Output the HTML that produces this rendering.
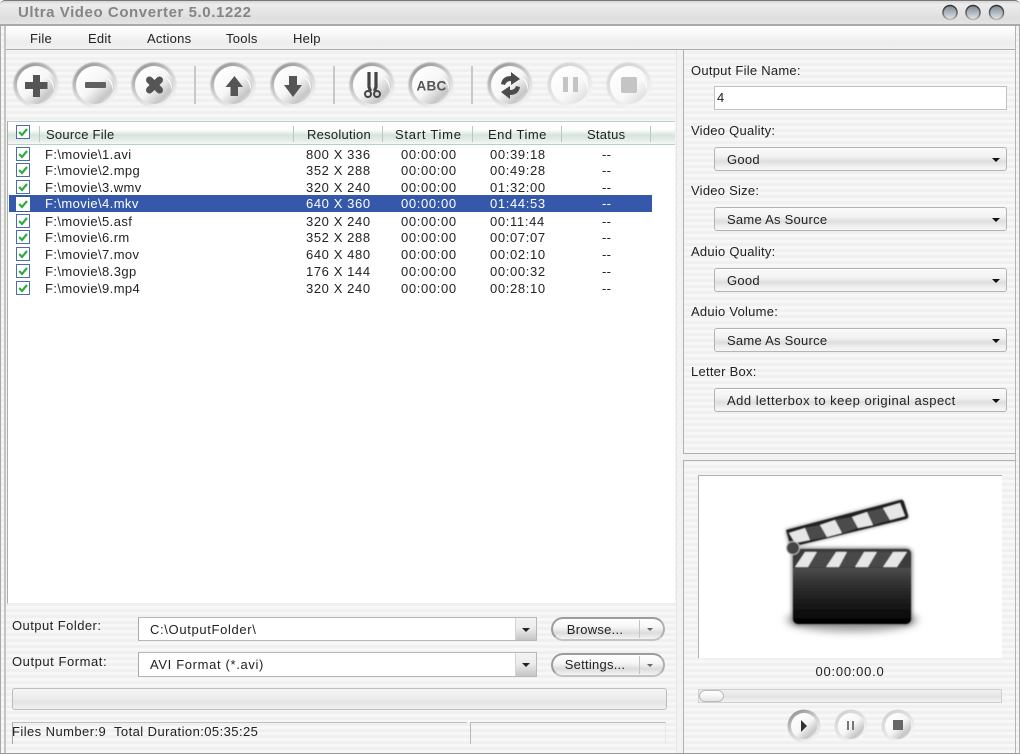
<!DOCTYPE html>
<html><head><meta charset="utf-8"><title>Ultra Video Converter</title>
<style>
html,body{margin:0;padding:0;background:#f2f2f2}
#w{position:relative;width:1020px;height:754px;overflow:hidden;font:13px/16px "Liberation Sans",sans-serif;color:#222;letter-spacing:.25px;
background:repeating-linear-gradient(#f7f7f7 0 3px,#f0f0f0 3px 6px)}
#w div{position:absolute;white-space:pre}
.combo{left:714px;width:291px;height:22px;border:1px solid #b4b4b4;border-radius:3px;background:linear-gradient(#fbfbfb,#f2f2f2 40%,#dedede 60%,#f0f0f0 85%,#f6f6f6)}
.combo span{position:absolute;left:12px;top:4px}
.combo i{position:absolute;right:6px;top:10px;width:0;height:0;border:4.5px solid transparent;border-top:4.5px solid #111;border-bottom:0}
.lab{left:691px}
.inp{left:138px;width:397px;height:22px;background:#fff;border:1px solid #b8b8b8;border-left-color:#aaa}
.inp span{position:absolute;left:11px;top:4px;letter-spacing:.65px}
.dd{position:absolute;right:0;top:0;width:20px;height:100%;background:linear-gradient(#f4f4f4,#ececec 45%,#c4c4c4);border-left:1px solid #d4d4d4;margin:0}
.dd i{position:absolute;left:6px;top:10px;border:4px solid transparent;border-top:4px solid #222;border-bottom:0;width:0;height:0}
.pill{left:551px;width:110px;height:20px;border:2px solid #9c9c9c;border-radius:12px;background:linear-gradient(#fff,#f6f6f6 40%,#dcdcdc 70%,#f4f4f4);border-bottom-color:#c4c4c4;border-right-color:#b0b0b0}
.pill span{position:absolute;top:2px;left:0;width:84px;text-align:center}
.pill b{position:absolute;left:86px;top:1px;width:1px;height:18px;background:#c4c4c4}
.pill i{position:absolute;left:94px;top:9px;border:3px solid transparent;border-top:3px solid #666;border-bottom:0;width:0;height:0}
.r{left:9px;width:643px;height:17px;line-height:17px}
.r span{position:absolute;top:0}
.a{left:36px;letter-spacing:.4px}.b{left:297px;letter-spacing:.6px}.c{left:392px;letter-spacing:.65px}.d{left:481px;letter-spacing:.65px}.e{left:593px}
.sel{background:#3558ab;color:#fff}
.h{top:127px;line-height:16px}
.sp{top:126px;width:1px;height:16px;background:#b9c9bf}
</style></head><body>
<div id="w">
<!-- title bar -->
<div style="left:0;top:0;width:1020px;height:25px;background:linear-gradient(#d6d6d6,#ececec 14%,#e4e4e4 50%,#dedede 75%,#e6e6e6);border-top:1px solid #777;box-sizing:border-box;border-radius:5px 5px 0 0"></div>
<div style="left:18px;top:4px;font:bold 15px/18px 'Liberation Sans',sans-serif;color:#858585;letter-spacing:.57px">Ultra Video Converter 5.0.1222</div>
<div style="left:0;top:24px;width:1020px;height:2px;background:#a9a9a9"></div>
<!-- frame -->
<div style="left:0;top:26px;width:1px;height:728px;background:#aaa"></div>
<div style="left:4px;top:26px;width:2px;height:728px;background:#c4c4c4"></div>
<div style="left:1015px;top:26px;width:1px;height:728px;background:#b4b4b4"></div>
<div style="left:1019px;top:26px;width:1px;height:728px;background:#aaa"></div>
<div style="left:0;top:753px;width:1020px;height:1px;background:#999"></div>
<!-- menu -->
<div style="left:6px;top:26px;width:1009px;height:23px;background:linear-gradient(#fff,#f8f8f8 35%,#ededed 70%,#f1f1f1);border-bottom:1px solid #ababab"></div>
<div style="left:30px;top:31px">File</div>
<div style="left:88px;top:31px">Edit</div>
<div style="left:147px;top:31px">Actions</div>
<div style="left:226px;top:31px">Tools</div>
<div style="left:293px;top:31px">Help</div>
<!-- splitters -->
<div style="left:676px;top:50px;width:6px;height:703px;background:#f2f2f2;border-left:1px solid #e8e4e0;border-right:1px solid #b0b0b0"></div>
<div style="left:683px;top:453px;width:332px;height:8px;background:#f2f2f2;border-top:1px solid #b0b0b0;border-bottom:1px solid #b0b0b0;box-sizing:border-box"></div>
<!-- toolbar separators -->
<div style="left:194px;top:66px;width:2px;height:38px;background:#c8c8c8"></div>
<div style="left:333px;top:66px;width:2px;height:38px;background:#c8c8c8"></div>
<div style="left:471px;top:66px;width:2px;height:38px;background:#c8c8c8"></div>
<!-- list -->
<div style="left:7px;top:121px;width:668px;height:483px;background:#fff;border-left:1px solid #a8b0a8;box-sizing:border-box;border-bottom:1px solid #f0ece6"></div>
<div style="left:8px;top:121px;width:667px;height:24px;box-sizing:border-box;border-top:1px solid #b8cfc0;border-bottom:1px solid #b8cfc0;background:linear-gradient(#fff,#fdfefd 35%,#d6e4dc 60%,#e6efe9 85%,#f6f9f7)"></div>
<div class="sp" style="left:39px"></div><div class="sp" style="left:293px"></div><div class="sp" style="left:382px"></div><div class="sp" style="left:472px"></div><div class="sp" style="left:561px"></div><div class="sp" style="left:650px"></div>
<div class="h" style="left:46px">Source File</div>
<div class="h" style="left:307px">Resolution</div>
<div class="h" style="left:395px;letter-spacing:.75px">Start Time</div>
<div class="h" style="left:488px;letter-spacing:.5px">End Time</div>
<div class="h" style="left:587px">Status</div>
<div class="r" style="top:146px"><span class="a">F:\movie\1.avi</span><span class="b">800 X 336</span><span class="c">00:00:00</span><span class="d">00:39:18</span><span class="e">--</span></div>
<div class="r" style="top:162px"><span class="a">F:\movie\2.mpg</span><span class="b">352 X 288</span><span class="c">00:00:00</span><span class="d">00:49:28</span><span class="e">--</span></div>
<div class="r" style="top:179px"><span class="a">F:\movie\3.wmv</span><span class="b">320 X 240</span><span class="c">00:00:00</span><span class="d">01:32:00</span><span class="e">--</span></div>
<div class="r sel" style="top:195px"><span class="a">F:\movie\4.mkv</span><span class="b">640 X 360</span><span class="c">00:00:00</span><span class="d">01:44:53</span><span class="e">--</span></div>
<div class="r" style="top:213px"><span class="a">F:\movie\5.asf</span><span class="b">320 X 240</span><span class="c">00:00:00</span><span class="d">00:11:44</span><span class="e">--</span></div>
<div class="r" style="top:229px"><span class="a">F:\movie\6.rm</span><span class="b">352 X 288</span><span class="c">00:00:00</span><span class="d">00:07:07</span><span class="e">--</span></div>
<div class="r" style="top:246px"><span class="a">F:\movie\7.mov</span><span class="b">640 X 480</span><span class="c">00:00:00</span><span class="d">00:02:10</span><span class="e">--</span></div>
<div class="r" style="top:263px"><span class="a">F:\movie\8.3gp</span><span class="b">176 X 144</span><span class="c">00:00:00</span><span class="d">00:00:32</span><span class="e">--</span></div>
<div class="r" style="top:280px"><span class="a">F:\movie\9.mp4</span><span class="b">320 X 240</span><span class="c">00:00:00</span><span class="d">00:28:10</span><span class="e">--</span></div>
<!-- bottom left -->
<div style="left:12px;top:618px;letter-spacing:.45px">Output Folder:</div>
<div style="left:12px;top:654px;letter-spacing:.55px">Output Format:</div>
<div class="inp" style="top:617px"><span>C:\OutputFolder\</span><p class="dd"><i></i></p></div>
<div class="inp" style="top:652px;height:23px"><span>AVI Format (*.avi)</span><p class="dd"><i></i></p></div>
<div class="pill" style="top:617px"><span style="top:3px">Browse...</span><b></b><i></i></div>
<div class="pill" style="top:653px"><span>Settings...</span><b></b><i></i></div>
<div style="left:12px;top:688px;width:653px;height:20px;border:1px solid #bdbdbd;border-radius:3px;background:linear-gradient(#f4f4f4,#ededed 45%,#e4e4e4 65%,#f0f0f0)"></div>
<div style="left:12px;top:722px;width:454px;height:21px;border-top:1px solid #bdbdbd;border-left:1px solid #a8a8a8"></div>
<div style="left:470px;top:722px;width:194px;height:21px;border-top:1px solid #bdbdbd;border-left:1px solid #b8b8b8;border-right:1px solid #e8e8e8"></div>
<div style="left:12px;top:724px;letter-spacing:.43px">Files Number:9  Total Duration:05:35:25</div>
<!-- right panel -->
<div class="lab" style="top:63px">Output File Name:</div>
<div style="left:714px;top:86px;width:291px;height:22px;background:#fff;border:1px solid #c0c0c0"><span style="position:absolute;left:2px;top:3px">4</span></div>
<div class="lab" style="top:123px">Video Quality:</div>
<div class="combo" style="top:147px"><span>Good</span><i></i></div>
<div class="lab" style="top:183px">Video Size:</div>
<div class="combo" style="top:207px"><span>Same As Source</span><i></i></div>
<div class="lab" style="top:244px">Aduio Quality:</div>
<div class="combo" style="top:268px"><span>Good</span><i></i></div>
<div class="lab" style="top:304px">Aduio Volume:</div>
<div class="combo" style="top:328px"><span>Same As Source</span><i></i></div>
<div class="lab" style="top:364px">Letter Box:</div>
<div class="combo" style="top:388px"><span style="letter-spacing:.5px">Add letterbox to keep original aspect</span><i></i></div>
<!-- preview -->
<div style="left:698px;top:475px;width:304px;height:183px;box-sizing:border-box;background:#fff;border-top:1px solid #b0b0b0;border-left:1px solid #b0b0b0"></div>
<div style="left:698px;top:664px;width:304px;text-align:center;letter-spacing:.75px">00:00:00.0</div>
<div style="left:698px;top:689px;width:302px;height:12px;border:1px solid #d0d0d0;background:linear-gradient(#f0f0f0,#e4e4e4 55%,#f2f2f2)"></div>
<div style="left:699px;top:690px;width:23px;height:10px;border:1px solid #bbb;border-radius:6px;background:linear-gradient(#fff,#f2f2f2 60%,#e4e4e4)"></div>
<!-- graphics -->
<svg style="position:absolute;left:0;top:0" width="1020" height="754" viewBox="0 0 1020 754">
<defs>
<linearGradient id="ring" x1="0.2" y1="0" x2="0.8" y2="1"><stop offset="0" stop-color="#8e8e8e"/><stop offset=".45" stop-color="#cfcfcf"/><stop offset="1" stop-color="#f8f8f8"/></linearGradient>
<linearGradient id="face" x1="0.15" y1="0.1" x2="0.9" y2="0.9"><stop offset="0" stop-color="#fff"/><stop offset=".5" stop-color="#f6f6f6"/><stop offset=".85" stop-color="#c6c6c6"/><stop offset="1" stop-color="#e4e4e4"/></linearGradient>
<linearGradient id="ringL" x1="0.2" y1="0" x2="0.8" y2="1"><stop offset="0" stop-color="#d0d0d0"/><stop offset=".5" stop-color="#e4e4e4"/><stop offset="1" stop-color="#fafafa"/></linearGradient>
<linearGradient id="faceL" x1="0.15" y1="0.1" x2="0.9" y2="0.9"><stop offset="0" stop-color="#fff"/><stop offset=".6" stop-color="#f8f8f8"/><stop offset="1" stop-color="#dcdcdc"/></linearGradient>
<linearGradient id="body" x1="0" y1="0" x2="0" y2="1"><stop offset="0" stop-color="#6e6e6e"/><stop offset=".45" stop-color="#333"/><stop offset="1" stop-color="#000"/></linearGradient>
<linearGradient id="wb" x1="0" y1="0" x2="0" y2="1"><stop offset="0" stop-color="#7f878f"/><stop offset=".45" stop-color="#a9b1b9"/><stop offset="1" stop-color="#e4e8ec"/></linearGradient>
<linearGradient id="wbs" x1="0" y1="0" x2="0" y2="1"><stop offset="0" stop-color="#333"/><stop offset=".6" stop-color="#666"/><stop offset="1" stop-color="#bbb"/></linearGradient>
<filter id="bl" x="-30%" y="-30%" width="160%" height="160%"><feGaussianBlur stdDeviation="4"/></filter>
<filter id="bh" x="-20%" y="-20%" width="140%" height="140%"><feGaussianBlur stdDeviation="2"/></filter>
<filter id="bs" x="-10%" y="-10%" width="120%" height="120%"><feGaussianBlur stdDeviation=".6"/></filter>
<filter id="br" x="-10%" y="-10%" width="120%" height="120%"><feGaussianBlur stdDeviation=".7"/></filter>
<symbol id="bn" viewBox="-24 -24 48 48" overflow="visible">
<circle r="22.500" fill="url(#ring)" filter="url(#br)"/><circle r="19" fill="url(#face)"/>
<path d="M10 -8 A14 14 0 0 1 17 6 A10 10 0 0 0 10 -8Z" fill="#fff" opacity=".9"/>
</symbol>
<symbol id="bnL" viewBox="-24 -24 48 48" overflow="visible">
<circle r="22.500" fill="url(#ringL)" filter="url(#br)"/><circle r="19" fill="url(#faceL)"/>
<path d="M10 -8 A14 14 0 0 1 17 6 A10 10 0 0 0 10 -8Z" fill="#fff"/>
</symbol>
<symbol id="ck" viewBox="0 0 14 14">
<rect x=".5" y=".5" width="13" height="13" fill="#fff" stroke="#4a6fa8"/>
<path d="M3.2 7 L6 10 L11 4" fill="none" stroke="#2eab3a" stroke-width="2.2"/>
</symbol>
</defs>
<g><use href="#bn" x="12" y="61" width="48" height="48"/><path d="M33 75h7v7h7.500v7h-7.500v8h-7v-8h-8v-7h8z" fill="#555"/></g>
<g><use href="#bn" x="71" y="61" width="48" height="48"/><rect x="85" y="82" width="21" height="6" rx="1" fill="#606060"/></g>
<g><use href="#bn" x="130" y="61" width="48" height="48"/><path d="M149.500 80l10 10M159.500 80l-10 10" fill="none" stroke="#555" stroke-width="7" stroke-linecap="round"/></g>
<g><use href="#bn" x="209" y="61" width="48" height="48"/><path d="M234.500 76l8.500 11h-5v9h-7.500v-9h-5z" fill="#555"/></g>
<g><use href="#bn" x="269" y="61" width="48" height="48"/><path d="M289 76h8v9h5l-9 12-9-12h5z" fill="#555"/></g>
<g><use href="#bn" x="348" y="61" width="48" height="48"/>
<path d="M369 72v15l1.500 4M376 72v15l-1.500 4" fill="none" stroke="#444" stroke-width="3.200"/>
<circle cx="368" cy="94" r="3" fill="none" stroke="#444" stroke-width="2"/><circle cx="377" cy="94" r="3" fill="none" stroke="#444" stroke-width="2"/></g>
<g><use href="#bn" x="407" y="61" width="48" height="48"/><text x="431.500" y="90.500" text-anchor="middle" font-family="'Liberation Sans',sans-serif" font-weight="bold" font-size="13.500" fill="#555">ABC</text></g>
<g><use href="#bn" x="486" y="61" width="48" height="48"/>
<path d="M501 84c1-6 5-8 10-8v-4l9 7-9 6v-4c-3 0-5 1-6 4z M520 87c-1 6-5 8-10 8v4l-9-7 9-6v4c3 0 5-1 6-4z" fill="#4c4c4c"/></g>
<g><use href="#bnL" x="546" y="61" width="48" height="48"/><rect x="563" y="77" width="5" height="15" fill="#c4c4c4"/><rect x="573" y="77" width="5" height="15" fill="#c4c4c4"/></g>
<g><use href="#bnL" x="605" y="61" width="48" height="48"/><rect x="621" y="77" width="16" height="16" rx="2" fill="#c4c4c4"/></g>
<!-- checkboxes -->
<use href="#ck" x="16" y="125" width="14" height="14"/>
<use href="#ck" x="16" y="147" width="14" height="14"/>
<use href="#ck" x="16" y="163" width="14" height="14"/>
<use href="#ck" x="16" y="180" width="14" height="14"/>
<rect x="16" y="197" width="14" height="14" fill="#fff"/><path d="M19.200 204 L22 207 L27 201" fill="none" stroke="#2eab3a" stroke-width="2.200"/>
<use href="#ck" x="16" y="214" width="14" height="14"/>
<use href="#ck" x="16" y="230" width="14" height="14"/>
<use href="#ck" x="16" y="247" width="14" height="14"/>
<use href="#ck" x="16" y="264" width="14" height="14"/>
<use href="#ck" x="16" y="281" width="14" height="14"/>
<!-- clapper -->
<ellipse cx="852" cy="620" rx="66" ry="12" fill="#777" opacity=".65" filter="url(#bl)"/>
<path d="M786 530L902 500L908 518L790 547Z" fill="#777" filter="url(#bh)"/>
<rect x="792" y="548" width="120" height="77" rx="6" fill="#777" filter="url(#bh)"/>
<g filter="url(#bs)">
<path d="M786 530L900 500Q903 499 904 502L908 515Q909 518 906 519L791 547Z" fill="#222"/>
<path d="M805 528l15-3 7 12-17 3zM835 520l17-3 6 11-15 5zM867 512l16-4 7 12-17 5z" fill="#4c4c4c"/>
<path d="M789 533l16-5 5 12-15 3zM820 525l15-5 7 13-15 4zM852 517l15-5 6 13-15 3zM883 508l17-5 5 13-15 4z" fill="#e6e6e6"/>
<rect x="793" y="549" width="118" height="75" rx="5" fill="url(#body)"/>
<path d="M793 568v-14q0-5 5-5h108q5 0 5 5v14z" fill="#3a3a3a"/>
<path d="M805 552h12l-9 15h-13zM836 552h11l-8 15h-13zM864 552h13l-9 15h-13zM893 552h14l-10 15h-14z" fill="#e6e6e6"/>
<path d="M817 552h19l-10 15h-18zM847 552h17l-9 15h-16zM877 552h16l-10 15h-15z" fill="#4a4a4a"/>
<circle cx="793" cy="548" r="6.500" fill="#444" stroke="#bbb" stroke-width="1"/>
</g>
<!-- playback -->
<g><circle cx="804" cy="726" r="16.500" fill="url(#ring)"/><circle cx="804" cy="726" r="13" fill="url(#face)"/><path d="M801 720l6 6-6 6z" fill="#333"/></g>
<g><circle cx="851" cy="726" r="16.500" fill="url(#ringL)"/><circle cx="851" cy="726" r="13" fill="url(#face)"/><rect x="847" y="721" width="2" height="9" fill="#777"/><rect x="852" y="721" width="2" height="9" fill="#777"/></g>
<g><circle cx="898" cy="726" r="16.500" fill="url(#ringL)"/><circle cx="898" cy="726" r="13" fill="url(#face)"/><rect x="893" y="720" width="10" height="10" fill="#666"/></g>
<!-- window buttons -->
<g stroke="url(#wbs)" stroke-width="1.500" fill="url(#wb)"><circle cx="950" cy="12.500" r="7" /><circle cx="973" cy="12.500" r="7"/><circle cx="996.500" cy="12.500" r="7"/></g>
</svg>
</div>
</body></html>
